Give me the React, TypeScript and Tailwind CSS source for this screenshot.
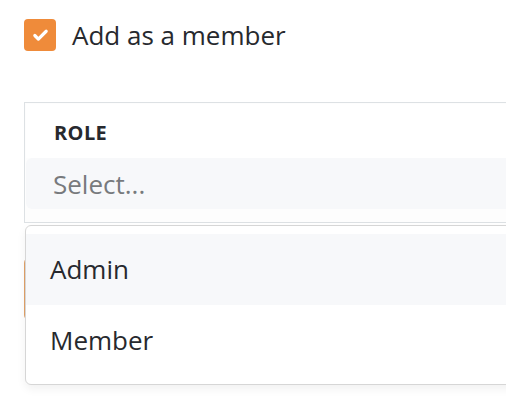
import { Check } from "lucide-react";

const App = () => {
  return (
    <div className="relative w-[506px] h-[410px] overflow-hidden bg-white font-['Open_Sans',sans-serif] text-[#27292e]">
      <div className="flex items-center gap-4 pl-6 pt-[19px]">
        <div className="flex items-center justify-center w-8 h-8 rounded-[4px] bg-[#ef8b3a]">
          <Check className="w-[17px] h-[17px] text-white" strokeWidth={4.5} />
        </div>
        <span className="text-[26px] leading-8">Add as a member</span>
      </div>

      <div className="ml-6 mt-[51px] w-[540px] border border-[#dde1e4] bg-[#fdfdfd] p-px pb-[13px]">
        <div className="bg-white px-[28px] pt-[19px] pb-[15px] text-[20px] font-bold leading-5 tracking-[0.02em]">
          ROLE
        </div>
        <div className="flex items-center h-[51px] rounded-l-md bg-[#f7f8fa] px-[27px] pt-[2px] text-[26px] text-[#777a7d]">
          Select...
        </div>
      </div>

      <div className="ml-6 mt-[34px] h-16 w-[540px] rounded-md bg-[#e2a167]" />

      <div className="absolute left-[25px] top-[225px] w-[540px] rounded-md border border-[#d6d6d6] bg-white py-2 shadow-[0_4px_10px_rgba(0,0,0,0.06)]">
        <div className="flex items-center h-[71px] bg-[#f7f8fa] px-6 text-[26px]">Admin</div>
        <div className="flex items-center h-[71px] px-6 text-[26px]">Member</div>
      </div>
    </div>
  );
};

export default App;
